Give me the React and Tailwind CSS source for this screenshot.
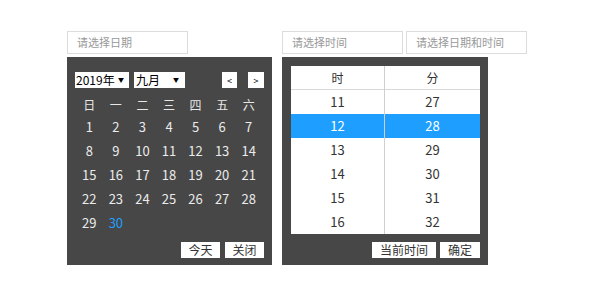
import React from "react";

const font = { fontFamily: '"Noto Sans CJK SC", "Liberation Sans", sans-serif' };

export default function App() {
  const weekdays = ["日", "一", "二", "三", "四", "五", "六"];
  const days = Array.from({ length: 30 }, (_, i) => i + 1);
  const rows = [];
  for (let i = 0; i < days.length; i += 7) rows.push(days.slice(i, i + 7));

  const hours = [11, 12, 13, 14, 15, 16];
  const minutes = [27, 28, 29, 30, 31, 32];

  return (
    <div className="w-[590px] h-[300px] bg-white flex pl-[67px] pt-[31px] gap-[10px]" style={font}>
      {/* date picker */}
      <div className="flex flex-col w-[205px]">
        <div className="w-[121px] h-[23px] border border-[#dcdcdc] text-[11px] text-[#999] pl-[9px] flex items-center">
          请选择日期
        </div>
        <div className="mt-[3px] h-[208px] bg-[#474747] pt-[15px] pl-[8px] pr-[8px] flex flex-col">
          <div className="flex items-center h-[16px]">
            <div className="w-[54px] h-[16px] bg-white text-[12px] text-black flex items-center justify-between pl-[1px] pr-[5px] leading-none">
              <span>2019年</span>
              <span className="text-[6px]">▼</span>
            </div>
            <div className="ml-[5px] w-[51px] h-[16px] bg-white text-[12px] text-black flex items-center justify-between pl-[2px] pr-[6px] leading-none">
              <span>九月</span>
              <span className="text-[6px]">▼</span>
            </div>
            <div className="ml-auto w-[15px] h-[16px] bg-white text-[9px] text-black flex items-center justify-center leading-none">&lt;</div>
            <div className="ml-[11px] w-[16px] h-[16px] bg-white text-[9px] text-black flex items-center justify-center leading-none">&gt;</div>
          </div>
          <div className="mt-[6px] pl-[1px] pr-[2px]">
            <div className="grid grid-cols-7 h-[21px] items-center text-[12px] text-[#e8e8e8]">
              {weekdays.map((w) => (
                <div key={w} className="text-center">{w}</div>
              ))}
            </div>
            {rows.map((r, ri) => (
              <div key={ri} className="grid grid-cols-7 h-[24px] items-center text-[13px] text-[#ececec]">
                {r.map((d) => (
                  <div key={d} className={`text-center ${d === 30 ? "text-[#1e9fff]" : ""}`}>{d}</div>
                ))}
              </div>
            ))}
          </div>
          <div className="mt-[7px] flex justify-end gap-[5px]">
            <div className="w-[39px] h-[16px] bg-white text-[12px] text-[#333] flex items-center justify-center leading-none">今天</div>
            <div className="w-[39px] h-[16px] bg-white text-[12px] text-[#333] flex items-center justify-center leading-none">关闭</div>
          </div>
        </div>
      </div>

      {/* time picker */}
      <div className="flex flex-col">
        <div className="flex gap-[3px]">
          <div className="w-[121px] h-[23px] border border-[#dcdcdc] text-[11px] text-[#999] pl-[9px] flex items-center">
            请选择时间
          </div>
          <div className="w-[121px] h-[23px] border border-[#dcdcdc] text-[11px] text-[#999] pl-[9px] flex items-center">
            请选择日期和时间
          </div>
        </div>
        <div className="mt-[3px] w-[206px] h-[208px] bg-[#474747] pt-[9px] pl-[9px] pr-[8px] flex flex-col">
          <div className="bg-white flex text-[13px] text-[#333]">
            <div className="w-[94px] border-r border-[#cfcfcf]">
              <div className="h-[24px] flex items-center justify-center text-[12px] border-b border-[#d9d9d9]">时</div>
              {hours.map((h) => (
                <div key={h} className={`h-[24px] flex items-center justify-center ${h === 12 ? "bg-[#1e9fff] text-white" : ""}`}>{h}</div>
              ))}
            </div>
            <div className="flex-1">
              <div className="h-[24px] flex items-center justify-center text-[12px] border-b border-[#d9d9d9]">分</div>
              {minutes.map((m) => (
                <div key={m} className={`h-[24px] flex items-center justify-center ${m === 28 ? "bg-[#1e9fff] text-white" : ""}`}>{m}</div>
              ))}
            </div>
          </div>
          <div className="mt-[8px] flex justify-end gap-[4px]">
            <div className="w-[64px] h-[16px] bg-white text-[12px] text-[#333] flex items-center justify-center leading-none">当前时间</div>
            <div className="w-[40px] h-[16px] bg-white text-[12px] text-[#333] flex items-center justify-center leading-none">确定</div>
          </div>
        </div>
      </div>
    </div>
  );
}
